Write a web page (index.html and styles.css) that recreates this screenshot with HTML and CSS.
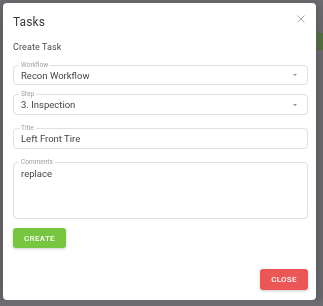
FILE: index.html
```html
<!DOCTYPE html>
<html lang="en">
<head>
    <meta charset="UTF-8">
    <meta name="viewport" content="width=device-width, initial-scale=1.0">
    <title>Tasks</title>
    <link rel="stylesheet" href="styles.css">
</head>
<body>
    <div class="backdrop">
        <div class="page-chip"></div>
    </div>

    <div class="dialog">
        <div class="dialog-header">
            <h2 class="dialog-title">Tasks</h2>
            <button class="dialog-close" aria-label="Close">
                <svg width="8" height="8" viewBox="0 0 8 8">
                    <path d="M0.5 0.5 L7.5 7.5 M7.5 0.5 L0.5 7.5" stroke="#a3a3a3" stroke-width="0.9" fill="none"/>
                </svg>
            </button>
        </div>

        <div class="dialog-subtitle">Create Task</div>

        <div class="field field-select field-short">
            <span class="field-label">Workflow</span>
            <span class="field-value">Recon Workflow</span>
            <span class="select-arrow"></span>
        </div>

        <div class="field field-select field-step">
            <span class="field-label">Step</span>
            <span class="field-value">3. Inspection</span>
            <span class="select-arrow"></span>
        </div>

        <div class="field">
            <span class="field-label">Title</span>
            <span class="field-value">Left Front Tire</span>
        </div>

        <div class="field field-area">
            <span class="field-label">Comments</span>
            <span class="field-value">replace</span>
        </div>

        <div class="actions">
            <button class="btn btn-create">Create</button>
        </div>

        <div class="dialog-footer">
            <button class="btn btn-close">Close</button>
        </div>
    </div>
</body>
</html>
```

FILE: styles.css
```css
body {
    margin: 0;
    background: #6b6b70;
    font-family: Roboto, 'Noto Sans', sans-serif;
    color: #444;
}
.backdrop {
    position: fixed;
    inset: 0;
    z-index: 0;
}
.page-chip {
    position: absolute;
    right: 0;
    top: 33px;
    width: 6px;
    height: 17px;
    background: #56703f;
}
.dialog {
    position: relative;
    z-index: 1;
    box-sizing: border-box;
    width: 313px;
    height: 297px;
    margin: 3px 0 0 3px;
    padding: 10px 8px 10px 10px;
    background: white;
    border-radius: 4px;
    box-shadow: 0 4px 14px rgba(0, 0, 0, 0.25);
    display: flex;
    flex-direction: column;
}
.dialog-header {
    display: flex;
    justify-content: space-between;
    align-items: flex-start;
}
.dialog-title {
    margin: 0;
    font-size: 12px;
    line-height: 18px;
    font-weight: 400;
    letter-spacing: 0.1px;
    color: #3a3a3a;
}
.dialog-close {
    border: none;
    background: none;
    padding: 0;
    margin: 2px 3px 0 0;
    width: 8px;
    height: 8px;
    cursor: pointer;
    display: flex;
}
.dialog-subtitle {
    margin-top: 9px;
    font-size: 9px;
    line-height: 14px;
    letter-spacing: 0.1px;
    color: #4a4a4a;
}
.field {
    position: relative;
    box-sizing: border-box;
    height: 21px;
    margin-top: 13px;
    padding: 0 7px;
    border: 1px solid #e0e0e0;
    border-radius: 4px;
    display: flex;
    align-items: center;
}
.field-short {
    height: 20px;
    margin-top: 11px;
}
.field-step {
    margin-top: 9px;
}
.field-area {
    height: 57px;
    align-items: flex-start;
    padding-top: 4px;
}
.field-label {
    position: absolute;
    top: -5px;
    left: 5px;
    padding: 0 2px;
    background: white;
    font-size: 6.5px;
    line-height: 8px;
    color: #a0a0a0;
}
.field-value {
    flex: 1;
    font-size: 9.5px;
    line-height: 13px;
    color: #444;
}
.select-arrow {
    width: 0;
    height: 0;
    margin-right: 3px;
    border-left: 2.5px solid transparent;
    border-right: 2.5px solid transparent;
    border-top: 2.5px solid #8e8e8e;
}
.actions {
    margin-top: 9px;
    display: flex;
}
.btn {
    border: none;
    border-radius: 3px;
    color: white;
    font-family: Roboto, 'Noto Sans', sans-serif;
    font-size: 8px;
    font-weight: 500;
    letter-spacing: 0.3px;
    text-transform: uppercase;
    cursor: pointer;
    box-shadow: 0 1px 3px rgba(0, 0, 0, 0.2);
}
.btn-create {
    width: 53px;
    height: 20px;
    background: #77c63f;
}
.dialog-footer {
    margin-top: auto;
    display: flex;
    justify-content: flex-end;
}
.btn-close {
    width: 48px;
    height: 21px;
    background: #eb5757;
}
```
